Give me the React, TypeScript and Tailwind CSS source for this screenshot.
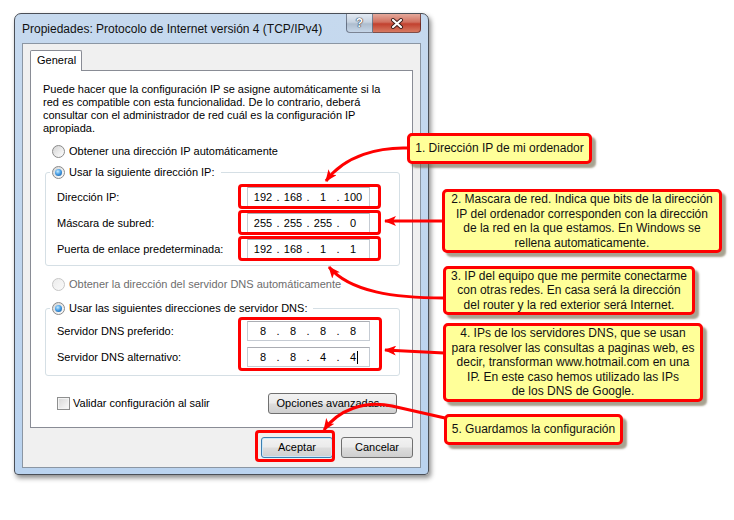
import React from 'react';

const Radio = ({ checked = false, disabled = false }: { checked?: boolean; disabled?: boolean }) => (
  <span
    className={`flex h-[13px] w-[13px] shrink-0 items-center justify-center rounded-full border ${
      disabled
        ? 'border-[#c6c6c6] bg-[linear-gradient(135deg,#ececec,#fafafa)]'
        : 'border-[#8a8a8a] bg-[linear-gradient(135deg,#d4d4d4,#ffffff)]'
    }`}
  >
    {checked && (
      <span className="h-[7px] w-[7px] rounded-full bg-[radial-gradient(circle_at_40%_35%,#c8ecff_0%,#4aa0e6_45%,#0d4f96_100%)]" />
    )}
  </span>
);

const IpField = ({ parts, cursor = false }: { parts: string[]; cursor?: boolean }) => (
  <div className="flex h-[20px] w-[123px] items-center border border-[#c5cbd3] border-t-[#abadb3] bg-white pl-[2px]">
    {parts.map((p, i) => (
      <React.Fragment key={i}>
        <span className="relative w-[26px] text-center">
          {p}
          {cursor && i === 3 && <span className="absolute left-[17px] top-0 h-[13px] w-px bg-black" />}
        </span>
        {i < 3 && <span className="w-[4px] text-center">.</span>}
      </React.Fragment>
    ))}
  </div>
);

const FieldRow = ({ label, parts, cursor }: { label: string; parts: string[]; cursor?: boolean }) => (
  <div className="flex h-[20px] items-center justify-between">
    <span>{label}</span>
    <IpField parts={parts} cursor={cursor} />
  </div>
);

const Callout = ({ className, children }: { className: string; children: React.ReactNode }) => (
  <div
    className={`absolute flex items-center justify-center rounded-[5px] border-[3px] border-[#ff0000] bg-[#ffff99] text-center font-['Liberation_Sans',Arial,sans-serif] text-[12px] leading-[14.5px] text-[#111] shadow-[4px_4px_2px_rgba(110,100,70,0.6)] ${className}`}
  >
    <p>{children}</p>
  </div>
);

const btn =
  'h-[21px] rounded-[3px] border bg-[linear-gradient(to_bottom,#f2f2f2_0%,#ebebeb_48%,#dddddd_52%,#cfcfcf_100%)] text-[11px] text-black';

export default function App() {
  return (
    <div className="relative h-[520px] w-[734px] overflow-hidden bg-white pl-[14px] pt-[13px] font-['Liberation_Sans',Arial,sans-serif] text-[11px] text-black">
      {/* dialog window */}
      <div className="flex h-[462px] w-[415px] flex-col rounded-t-[7px] rounded-b-[4px] border border-[#4a4f57] bg-[linear-gradient(to_bottom,#c6d9ee,#bad3ef)] px-[7px] pb-[6px] shadow-[2px_3px_5px_rgba(0,0,0,0.45)]">
        <div className="flex h-[29px] items-start justify-between">
          <span className="pt-[8px] text-[12px] leading-[14px] text-[#111]">
            Propiedades: Protocolo de Internet versión 4 (TCP/IPv4)
          </span>
          <div className="flex">
            <div className="flex h-[19px] w-[27px] items-center justify-center rounded-bl-[4px] border border-t-0 border-[rgba(40,50,70,0.55)] bg-[linear-gradient(to_bottom,#e2e9f2_0%,#c7d3e1_45%,#aebdce_55%,#c6d6e8_100%)] text-[12px] font-bold text-white [text-shadow:0_0_1px_#2b3340,0_0_1px_#2b3340,0_0_1px_#2b3340]">
              ?
            </div>
            <div className="flex h-[19px] w-[48px] items-center justify-center rounded-br-[4px] border border-l-0 border-t-0 border-[rgba(60,20,20,0.6)] bg-[linear-gradient(to_bottom,#e4a99b_0%,#d1705f_45%,#c2412f_55%,#d77a62_100%)]">
              <svg width="14" height="11" viewBox="0 0 14 11">
                <path d="M3 2 L11 9 M11 2 L3 9" stroke="#3b1d1a" strokeWidth="4" strokeLinecap="round" />
                <path d="M3 2 L11 9 M11 2 L3 9" stroke="#ffffff" strokeWidth="2.2" strokeLinecap="round" />
              </svg>
            </div>
          </div>
        </div>

        {/* client area */}
        <div className="flex flex-1 flex-col border border-[#8b96a3] bg-[#f0f0f0] px-[7px] pt-[6px]">
          <div className="relative z-10 -mb-px h-[21px] w-[52px] rounded-t-[2px] border border-b-0 border-[#898c95] bg-white pl-[6px] leading-[19px]">
            General
          </div>
          <div className="flex h-[358px] w-[383px] flex-col border border-[#898c95] bg-white px-[12px] pt-[12px] leading-[13px]">
            <p>
              Puede hacer que la configuración IP se asigne automáticamente si la
              <br />
              red es compatible con esta funcionalidad. De lo contrario, deberá
              <br />
              consultar con el administrador de red cuál es la configuración IP
              <br />
              apropiada.
            </p>
            <div className="ml-[9px] mt-[8px] flex h-[16px] items-center gap-[4px]">
              <Radio />
              Obtener una dirección IP automáticamente
            </div>
            <fieldset className="ml-[2px] mt-[5px] w-[355px] rounded-[3px] border border-[#d5dfe5] pb-[6px] pl-[4px] pr-[29px]">
              <legend className="pl-[2px] pr-[6px]">
                <span className="flex h-[16px] items-center gap-[4px]">
                  <Radio checked />
                  Usar la siguiente dirección IP:
                </span>
              </legend>
              <div className="flex flex-col gap-[6px] pl-[7px] pt-[7px]">
                <FieldRow label="Dirección IP:" parts={['192', '168', '1', '100']} />
                <FieldRow label="Máscara de subred:" parts={['255', '255', '255', '0']} />
                <FieldRow label="Puerta de enlace predeterminada:" parts={['192', '168', '1', '1']} />
              </div>
            </fieldset>
            <div className="ml-[9px] mt-[10px] flex h-[16px] items-center gap-[4px] text-[#6d6d6d]">
              <Radio disabled />
              Obtener la dirección del servidor DNS automáticamente
            </div>
            <fieldset className="ml-[2px] mt-[8px] w-[355px] rounded-[3px] border border-[#d5dfe5] pb-[8px] pl-[4px] pr-[29px]">
              <legend className="pl-[2px] pr-[6px]">
                <span className="flex h-[16px] items-center gap-[4px]">
                  <Radio checked />
                  Usar las siguientes direcciones de servidor DNS:
                </span>
              </legend>
              <div className="flex flex-col gap-[6px] pl-[7px] pt-[5px]">
                <FieldRow label="Servidor DNS preferido:" parts={['8', '8', '8', '8']} />
                <FieldRow label="Servidor DNS alternativo:" parts={['8', '8', '4', '4']} cursor />
              </div>
            </fieldset>
            <div className="mt-[17px] flex items-center">
              <div className="ml-[14px] flex items-center gap-[3px]">
                <span className="h-[13px] w-[13px] border border-[#8e8f8f] bg-[linear-gradient(135deg,#d6d6d6,#fbfbfb)] shadow-[inset_0_0_0_1px_#f4f4f4]" />
                Validar configuración al salir
              </div>
              <button className={`${btn} ml-auto mr-[3px] w-[129px] border-[#707070]`}>Opciones avanzadas...</button>
            </div>
          </div>
          <div className="mt-[9px] flex justify-end gap-[8px]">
            <button className={`${btn} w-[72px] border-[#3c7fb1] shadow-[inset_0_0_0_1px_#cde8f8]`}>Aceptar</button>
            <button className={`${btn} w-[72px] border-[#707070]`}>Cancelar</button>
          </div>
        </div>
      </div>

      {/* red highlight boxes */}
      <div className="absolute left-[238px] top-[184px] h-[25px] w-[143px] rounded-[4px] border-[3px] border-[#ff0000]" />
      <div className="absolute left-[238px] top-[210px] h-[25px] w-[143px] rounded-[4px] border-[3px] border-[#ff0000]" />
      <div className="absolute left-[238px] top-[236px] h-[25px] w-[143px] rounded-[4px] border-[3px] border-[#ff0000]" />
      <div className="absolute left-[238px] top-[317px] h-[54px] w-[144px] rounded-[4px] border-[3px] border-[#ff0000]" />
      <div className="absolute left-[255px] top-[430px] h-[32px] w-[80px] rounded-[4px] border-[3px] border-[#ff0000]" />

      {/* arrows */}
      <svg className="pointer-events-none absolute left-0 top-0" width="734" height="520" viewBox="0 0 734 520">
        <defs>
          <marker id="ah" viewBox="0 0 12 10" refX="11" refY="5" markerWidth="12" markerHeight="10" markerUnits="userSpaceOnUse" orient="auto">
            <path d="M0,0 L12,5 L0,10 L3,5 Z" fill="#ff0000" />
          </marker>
        </defs>
        <g fill="none" stroke="#ff0000" strokeWidth="3" markerEnd="url(#ah)">
          <path d="M408,148 C380,147 345,155 326,181" />
          <path d="M443,221 L385,221" />
          <path d="M444,298 C395,298 350,292 329,267" />
          <path d="M444,353 L385,350" />
          <path d="M445,418 L392,406 C365,400 338,410 324,430" />
        </g>
      </svg>

      {/* callouts */}
      <Callout className="left-[407px] top-[133px] h-[31px] w-[185px]">1. Dirección IP de mi ordenador</Callout>
      <Callout className="left-[442px] top-[189px] h-[64px] w-[280px]">
        2. Mascara de red. Indica que bits de la dirección
        <br />
        IP del ordenador corresponden con la dirección
        <br />
        de la red en la que estamos. En Windows se
        <br />
        rellena automaticamente.
      </Callout>
      <Callout className="left-[443px] top-[266px] h-[49px] w-[252px]">
        3. IP del equipo que me permite conectarme
        <br />
        con otras redes. En casa será la dirección
        <br />
        del router y la red exterior será Internet.
      </Callout>
      <Callout className="left-[443px] top-[323px] h-[79px] w-[260px]">
        4. IPs de los servidores DNS, que se usan
        <br />
        para resolver las consultas a paginas web, es
        <br />
        decir, transforman www.hotmail.com en una
        <br />
        IP. En este caso hemos utilizado las IPs
        <br />
        de los DNS de Google.
      </Callout>
      <Callout className="left-[444px] top-[414px] h-[31px] w-[179px]">5. Guardamos la configuración</Callout>
    </div>
  );
}
